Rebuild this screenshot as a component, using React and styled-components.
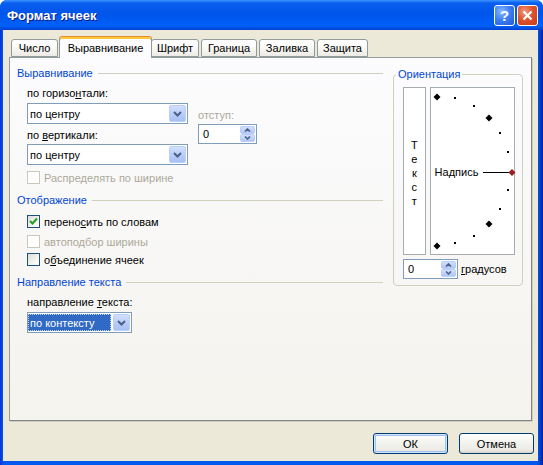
import styled, { createGlobalStyle } from "styled-components";

const GlobalStyle = createGlobalStyle`
  html, body { margin: 0; padding: 0; background: #ffffff; }
  body {
    font-family: "Liberation Sans", Arial, sans-serif;
    font-size: 11px;
    color: #000;
  }
  * { box-sizing: border-box; }
`;

const Window = styled.div`
  width: 543px;
  height: 465px;
  display: flex;
  flex-direction: column;
  background: linear-gradient(to right, #0831d9 0px, #0058ee 3px, #0058ee 537px, #0043cf 540px, #001ea0 543px);
  border-radius: 7px 7px 0 0;
  overflow: hidden;
`;

const TitleBar = styled.div`
  height: 30px;
  flex: none;
  display: flex;
  align-items: center;
  justify-content: space-between;
  padding: 0 5px 0 7px;
  background: linear-gradient(
    to bottom,
    #3d95ff 0%,
    #0a5ff0 10%,
    #0055ea 45%,
    #0060f8 85%,
    #0052e6 93%,
    #003dd0 100%
  );
`;

const Title = styled.div`
  font-family: "Liberation Sans", Arial, sans-serif;
  font-weight: bold;
  font-size: 13px;
  color: #ffffff;
  text-shadow: 1px 1px 0 #0a1a8a;
`;

const TitleButtons = styled.div`
  display: flex;
  gap: 2px;
`;

const TitleButton = styled.div`
  width: 21px;
  height: 21px;
  border: 1px solid #ffffff;
  border-radius: 3px;
  display: flex;
  align-items: center;
  justify-content: center;
  color: #ffffff;
  font-weight: bold;
  font-size: 15px;
  background: ${(p) =>
    p.$close
      ? "radial-gradient(circle at 35% 30%, #f19b80 0%, #e0532f 45%, #c13a17 100%)"
      : "radial-gradient(circle at 35% 30%, #8cbcff 0%, #3d7ff5 45%, #2159d9 100%)"};
`;

const Body = styled.div`
  flex: 1;
  margin: 0 5px 4px 3px;
  background: #ece9d8;
  padding: 6px 6px 0 6px;
  display: flex;
  flex-direction: column;
`;

const TabStrip = styled.div`
  display: flex;
  align-items: flex-end;
  height: 21px;
  padding-left: 2px;
  position: relative;
  z-index: 1;
`;

const Tab = styled.div`
  width: ${(p) => p.$w}px;
  height: ${(p) => (p.$active ? 22 : 18)}px;
  margin: ${(p) => (p.$active ? "0 -1px -1px -1px" : "0 2px 0 0")};
  border: 1px solid #919b9c;
  border-bottom: ${(p) => (p.$active ? "none" : "1px solid #919b9c")};
  border-top-color: ${(p) => (p.$active ? "#e68b2c" : "#919b9c")};
  border-radius: 3px 3px 0 0;
  box-shadow: ${(p) => (p.$active ? "inset 0 2px 0 #ffc83c" : "none")};
  background: ${(p) =>
    p.$active ? "#fcfcfe" : "linear-gradient(#ffffff, #fcfcfb 35%, #ecebe6)"};
  display: flex;
  align-items: center;
  justify-content: center;
  padding-top: ${(p) => (p.$active ? 1 : 0)}px;
`;

const Panel = styled.div`
  height: 364px;
  border: 1px solid #919b9c;
  border-right-color: #7f8586;
  border-bottom-color: #7f8586;
  box-shadow: 1px 1px 0 #d0cebf;
  background: linear-gradient(#fcfcfe, #f4f3ee);
  display: flex;
  align-items: flex-start;
  gap: 10px;
  padding: 8px 8px 0 7px;
`;

const LeftCol = styled.div`
  width: 366px;
  display: flex;
  flex-direction: column;
`;

const Header = styled.div`
  display: flex;
  align-items: center;
  gap: 5px;
  height: 14px;
  margin-top: ${(p) => p.$mt || 0}px;
  color: #0046d5;
  &::after {
    content: "";
    flex: 1;
    height: 1px;
    background: #d0d0bf;
  }
`;

const Indent = styled.div`
  padding-left: 10px;
  display: flex;
  flex-direction: column;
`;

const Row = styled.div`
  display: flex;
  gap: 10px;
`;

const Col = styled.div`
  display: flex;
  flex-direction: column;
  margin-top: ${(p) => p.$mt || 0}px;
`;

const Label = styled.div`
  height: 14px;
  line-height: 14px;
  margin-top: ${(p) => p.$mt || 0}px;
  color: ${(p) => (p.$disabled ? "#aca899" : "#000")};
  white-space: nowrap;
`;

const Combo = styled.div`
  width: ${(p) => p.$w}px;
  height: 21px;
  margin-top: ${(p) => p.$mt || 0}px;
  border: 1px solid #7f9db9;
  background: #ffffff;
  display: flex;
`;

const ComboText = styled.div`
  flex: 1;
  display: flex;
  align-items: center;
  padding-left: 2px;
  margin: ${(p) => (p.$selected ? "1px 1px 1px 0" : "0")};
  background: ${(p) => (p.$selected ? "#316ac5" : "transparent")};
  color: ${(p) => (p.$selected ? "#ffffff" : "#000")};
  outline: ${(p) => (p.$selected ? "1px dotted #c0d0f0" : "none")};
  outline-offset: -1px;
`;

const ComboButton = styled.div`
  width: 17px;
  margin: 1px;
  border: 1px solid #b9cef8;
  border-radius: 2px;
  background: linear-gradient(#d2e0fd, #b6cbf8 60%, #a9c0f4);
  display: flex;
  align-items: center;
  justify-content: center;
`;

const Spinner = styled.div`
  width: ${(p) => p.$w}px;
  height: 20px;
  margin-top: ${(p) => p.$mt || 0}px;
  border: 1px solid #7f9db9;
  background: #ffffff;
  display: flex;
`;

const SpinText = styled.div`
  flex: 1;
  display: flex;
  align-items: center;
  padding-left: 4px;
`;

const SpinButtons = styled.div`
  width: 15px;
  margin: 1px;
  display: flex;
  flex-direction: column;
  gap: 0;
`;

const SpinHalf = styled.div`
  flex: 1;
  border: 1px solid #b9cef8;
  border-radius: 2px;
  background: linear-gradient(#d2e0fd, #b1c6f6);
  display: flex;
  align-items: center;
  justify-content: center;
`;

const CheckRow = styled.div`
  display: flex;
  align-items: center;
  gap: 4px;
  height: 13px;
  margin-top: ${(p) => p.$mt || 0}px;
  color: ${(p) => (p.$disabled ? "#aca899" : "#000")};
  white-space: nowrap;
`;

const CheckBox = styled.div`
  width: 13px;
  height: 13px;
  flex: none;
  border: 1px solid ${(p) => (p.$disabled ? "#cac8bb" : "#1c5180")};
  background: ${(p) =>
    p.$disabled ? "#ffffff" : "linear-gradient(135deg, #dcdcd7, #f4f4f0 60%, #ffffff)"};
  display: flex;
  align-items: center;
  justify-content: center;
`;

const Fieldset = styled.fieldset`
  width: 130px;
  margin: 2px 0 0 0;
  padding: 0 7px 6px 9px;
  min-width: 0;
  border: 1px solid #d0d0bf;
  border-radius: 4px;
`;

const Legend = styled.legend`
  padding: 0 2px;
  margin-left: -7px;
  color: #0046d5;
  font-size: 11px;
  line-height: 13px;
`;

const DialRow = styled.div`
  display: flex;
  gap: 4px;
  height: 168px;
  margin-top: 6px;
`;

const VerticalText = styled.div`
  width: 23px;
  border: 1px solid #a5acb2;
  background: #ffffff;
  display: flex;
  flex-direction: column;
  align-items: center;
  justify-content: center;
  line-height: 14px;
  padding-top: 3px;
`;

const ArcBox = styled.div`
  width: 87px;
  border: 1px solid #a5acb2;
  background: #ffffff;
  position: relative;
`;

const ArcCaption = styled.span`
  position: absolute;
  left: 4px;
  top: 77px;
  line-height: 14px;
`;

const DegreeRow = styled.div`
  display: flex;
  align-items: center;
  gap: 3px;
  margin-top: 4px;
`;

const Footer = styled.div`
  display: flex;
  justify-content: flex-end;
  gap: 11px;
  margin: 12px -2px 0 0;
`;

const Button = styled.div`
  width: 75px;
  height: 21px;
  border: 1px solid #003c74;
  border-radius: 3px;
  background: linear-gradient(#ffffff, #f4f4f0 40%, #ecebe6 85%, #d6d0c5);
  display: flex;
  align-items: center;
  justify-content: center;
  box-shadow: ${(p) =>
    p.$default ? "inset 0 0 0 1px #cee7ff, inset 0 0 0 2px #a4c0f0" : "none"};
`;

const Chevron = ({ up }) => (
  <svg width="9" height="6" viewBox="0 0 9 6">
    <path
      d={up ? "M1 5 L4.5 1.5 L8 5" : "M1 1 L4.5 4.5 L8 1"}
      stroke="#4d6185"
      strokeWidth="2"
      fill="none"
    />
  </svg>
);

const SmallChevron = ({ up }) => (
  <svg width="7" height="4" viewBox="0 0 7 4">
    <path
      d={up ? "M1 3.5 L3.5 1 L6 3.5" : "M1 0.5 L3.5 3 L6 0.5"}
      stroke="#4d6185"
      strokeWidth="1.6"
      fill="none"
    />
  </svg>
);

const Check = () => (
  <svg width="9" height="9" viewBox="0 0 9 9">
    <path d="M1 4 L3.5 6.5 L8 1.5" stroke="#21a121" strokeWidth="2" fill="none" />
  </svg>
);

const Combobox = ({ w, mt, text, selected }) => (
  <Combo $w={w} $mt={mt}>
    <ComboText $selected={selected}>{text}</ComboText>
    <ComboButton>
      <Chevron />
    </ComboButton>
  </Combo>
);

const SpinBox = ({ w, mt }) => (
  <Spinner $w={w} $mt={mt}>
    <SpinText>0</SpinText>
    <SpinButtons>
      <SpinHalf>
        <SmallChevron up />
      </SpinHalf>
      <SpinHalf>
        <SmallChevron />
      </SpinHalf>
    </SpinButtons>
  </Spinner>
);

const diamonds = [
  [6, 9],
  [58, 30],
  [58, 136],
  [6, 158],
];
const dots = [
  [24, 10],
  [43, 18],
  [69, 45],
  [77, 64],
  [77, 102],
  [69, 121],
  [43, 148],
  [24, 155],
];

const diamond = (x, y, r) =>
  `${x},${y - r} ${x + r},${y} ${x},${y + r} ${x - r},${y}`;

const Dial = () => (
  <ArcBox>
    <svg width="85" height="166" viewBox="0 0 85 166" style={{ position: "absolute", left: 0, top: 0 }}>
      {diamonds.map(([x, y]) => (
        <polygon key={`d${x}-${y}`} points={diamond(x, y, 3.5)} fill="#000" />
      ))}
      {dots.map(([x, y]) => (
        <rect key={`p${x}-${y}`} x={x - 1} y={y - 1} width="2" height="2" fill="#000" />
      ))}
      <line x1="52" y1="84.5" x2="78" y2="84.5" stroke="#000" strokeWidth="1" />
      <polygon points={diamond(81, 84.5, 3.5)} fill="#9b1c1c" />
    </svg>
    <ArcCaption>Надпись</ArcCaption>
  </ArcBox>
);

const tabs = [
  ["Число", 47],
  ["Выравнивание", 93],
  ["Шрифт", 48],
  ["Граница", 56],
  ["Заливка", 56],
  ["Защита", 51],
];

export default function App() {
  return (
    <>
      <GlobalStyle />
      <Window>
        <TitleBar>
          <Title>Формат ячеек</Title>
          <TitleButtons>
            <TitleButton>?</TitleButton>
            <TitleButton $close>
              <svg width="11" height="11" viewBox="0 0 11 11">
                <path d="M1.5 1.5 L9.5 9.5 M9.5 1.5 L1.5 9.5" stroke="#fff" strokeWidth="2.2" />
              </svg>
            </TitleButton>
          </TitleButtons>
        </TitleBar>
        <Body>
          <TabStrip>
            {tabs.map(([t, w]) => (
              <Tab key={t} $w={w} $active={t === "Выравнивание"}>
                {t}
              </Tab>
            ))}
          </TabStrip>
          <Panel>
            <LeftCol>
              <Header>Выравнивание</Header>
              <Indent>
                <Row>
                  <Col>
                    <Label $mt={6}>
                      по горизо<u>н</u>тали:
                    </Label>
                    <Combobox w={161} mt={3} text="по центру" />
                    <Label $mt={4}>
                      по <u>в</u>ертикали:
                    </Label>
                    <Combobox w={161} mt={2} text="по центру" />
                  </Col>
                  <Col $mt={28}>
                    <Label $disabled>отступ:</Label>
                    <SpinBox w={59} mt={2} />
                  </Col>
                </Row>
                <CheckRow $mt={6} $disabled>
                  <CheckBox $disabled />
                  Распределять по ширине
                </CheckRow>
              </Indent>
              <Header $mt={9}>Отображение</Header>
              <Indent>
                <CheckRow $mt={8}>
                  <CheckBox>
                    <Check />
                  </CheckBox>
                  <span>
                    перено<u>с</u>ить по словам
                  </span>
                </CheckRow>
                <CheckRow $mt={7} $disabled>
                  <CheckBox $disabled />
                  автоподбор ширины
                </CheckRow>
                <CheckRow $mt={5}>
                  <CheckBox />
                  <span>
                    о<u>б</u>ъединение ячеек
                  </span>
                </CheckRow>
              </Indent>
              <Header $mt={9}>Направление текста</Header>
              <Indent>
                <Label $mt={6}>
                  направление <u>т</u>екста:
                </Label>
                <Combobox w={105} mt={3} text="по контексту" selected />
              </Indent>
            </LeftCol>
            <Fieldset>
              <Legend>Ориентация</Legend>
              <DialRow>
                <VerticalText>
                  <span>Т</span>
                  <span>е</span>
                  <span>к</span>
                  <span>с</span>
                  <span>т</span>
                </VerticalText>
                <Dial />
              </DialRow>
              <DegreeRow>
                <SpinBox w={55} />
                <span>
                  <u>г</u>радусов
                </span>
              </DegreeRow>
            </Fieldset>
          </Panel>
          <Footer>
            <Button $default>ОК</Button>
            <Button>Отмена</Button>
          </Footer>
        </Body>
      </Window>
    </>
  );
}
